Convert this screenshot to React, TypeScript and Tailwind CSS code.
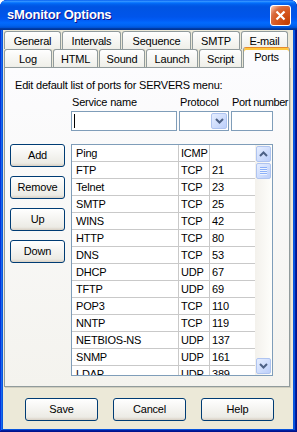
import React from 'react'

const topTabs = [
  { label: 'General', w: 'w-[57px]' },
  { label: 'Intervals', w: 'w-[59px]' },
  { label: 'Sequence', w: 'w-[69px]' },
  { label: 'SMTP', w: 'w-[48px]' },
  { label: 'E-mail', w: 'w-[47px]' },
]

const bottomTabs = [
  { label: 'Log', w: 'w-[48px]' },
  { label: 'HTML', w: 'w-[45px]' },
  { label: 'Sound', w: 'w-[46px]' },
  { label: 'Launch', w: 'w-[52px]' },
  { label: 'Script', w: 'w-[43px]' },
]

const ports = [
  ['Ping', 'ICMP', ''],
  ['FTP', 'TCP', '21'],
  ['Telnet', 'TCP', '23'],
  ['SMTP', 'TCP', '25'],
  ['WINS', 'TCP', '42'],
  ['HTTP', 'TCP', '80'],
  ['DNS', 'TCP', '53'],
  ['DHCP', 'UDP', '67'],
  ['TFTP', 'UDP', '69'],
  ['POP3', 'TCP', '110'],
  ['NNTP', 'TCP', '119'],
  ['NETBIOS-NS', 'UDP', '137'],
  ['SNMP', 'UDP', '161'],
  ['LDAP', 'UDP', '389'],
]

const tabCls =
  'h-[18px] flex justify-center pt-[2px] leading-[14px] border border-b-0 border-[#919B9C] rounded-t-[3px] bg-[linear-gradient(180deg,#fff,#fafaf9_26%,#f0f0ea_95%,#ecebe6)]'

const btnCls =
  'h-[23px] flex items-center justify-center border border-[#003C74] rounded-[3px] bg-[linear-gradient(180deg,#fff,#ecebe5_86%,#d8d0c4)]'

const scrollBtn =
  'w-[15px] h-[16px] flex items-center justify-center rounded-[2px] border border-[#AFC4F0] bg-[linear-gradient(135deg,#E6EEFF,#BCCFFA)]'

const Chevron = ({ up }: { up?: boolean }) => (
  <svg width="9" height="6" viewBox="0 0 9 6">
    <path
      d={up ? 'M1 5 L4.5 1.5 L8 5' : 'M1 1 L4.5 4.5 L8 1'}
      fill="none"
      stroke="#4D6185"
      strokeWidth="2"
    />
  </svg>
)

export default function App() {
  return (
    <div className="w-[297px] h-[432px] flex flex-col rounded-t-[7px] overflow-hidden bg-[#0855DD] shadow-[inset_-1px_-1px_#00138c,inset_1px_1px_#0831d9,inset_-2px_-2px_#001ea0,inset_2px_2px_#166aee] font-['Liberation_Sans',Arial,sans-serif] text-[11px] tracking-[-0.2px] text-black">
      {/* title bar */}
      <div className="h-[30px] shrink-0 flex items-center pl-[7px] pr-[6px] bg-[linear-gradient(180deg,#0058ee_0%,#3593ff_4%,#288eff_6%,#127dff_8%,#036ffc_10%,#0262ee_14%,#0057e5_20%,#0054e3_24%,#0055eb_56%,#005bf5_66%,#026afe_76%,#0062ef_86%,#0052d6_92%,#0040ab_94%,#003092_100%)]">
        <span className="text-white font-bold text-[13px] leading-[16px] [text-shadow:1px_1px_#0F1089]">sMonitor Options</span>
        <div className="ml-auto w-[21px] h-[21px] rounded-[3px] border border-white flex items-center justify-center bg-[radial-gradient(circle_at_90%_90%,#c43e00_0%,#d85a22_55%,#d86d42_72%,#f7b79a_92%,#fff_100%)]">
          <svg width="11" height="11" viewBox="0 0 11 11">
            <path d="M1.5 1.5 L9.5 9.5 M9.5 1.5 L1.5 9.5" stroke="#fff" strokeWidth="2.2" />
          </svg>
        </div>
      </div>

      {/* client */}
      <div className="flex-1 ml-[3px] mr-[4px] mb-[3px] bg-[#ECE9D8] pt-[1px]">
        <div className="flex gap-[1px] ml-[1px]">
          {topTabs.map((t) => (
            <div key={t.label} className={`${tabCls} ${t.w}`}>{t.label}</div>
          ))}
        </div>
        <div className="flex gap-[1px] ml-[1px] h-[18px]">
          {bottomTabs.map((t) => (
            <div key={t.label} className={`${tabCls} ${t.w}`}>{t.label}</div>
          ))}
          <div className="w-[47px] h-[21px] -mt-[2px] relative z-10 flex justify-center pt-[2px] leading-[14px] border border-b-0 border-[#919B9C] border-t-[#E68B2C] rounded-t-[3px] bg-[#FCFCFE] shadow-[inset_0_2px_#FFC73C]">
            Ports
          </div>
        </div>

        {/* panel */}
        <div className="ml-[1px] w-[286px] h-[320px] border border-[#919B9C] bg-[linear-gradient(180deg,#fcfcfe,#f4f3ee)] shadow-[1px_1px_#D0CEBF]">
          <div className="pt-[10px] pl-[10px] leading-[14px]">Edit default list of ports for SERVERS menu:</div>
          <div className="flex mt-[3px] pl-[67px] leading-[14px]">
            <span className="w-[108px]">Service name</span>
            <span className="w-[52px]">Protocol</span>
            <span className="whitespace-nowrap tracking-[-0.4px]">Port number</span>
          </div>
          <div className="flex gap-[2px] mt-[2px] pl-[66px]">
            <div className="w-[106px] h-[20px] border border-[#7F9DB9] bg-white pl-[2px] pt-[2px]">
              <div className="w-[1px] h-[14px] bg-black" />
            </div>
            <div className="w-[50px] h-[20px] border border-[#7F9DB9] bg-white flex justify-end p-[1px]">
              <div className="w-[16px] h-[16px] flex items-center justify-center rounded-[2px] border border-[#AFC4F0] bg-[linear-gradient(135deg,#E6EEFF,#BCCFFA)]">
                <Chevron />
              </div>
            </div>
            <div className="w-[42px] h-[20px] border border-[#7F9DB9] bg-white" />
          </div>

          <div className="flex mt-[13px]">
            <div className="flex flex-col gap-[9px] pl-[5px] w-[60px]">
              {['Add', 'Remove', 'Up', 'Down'].map((b) => (
                <div key={b} className={`${btnCls} w-[55px]`}>{b}</div>
              ))}
            </div>
            <div className="ml-[6px] w-[202px] h-[232px] border border-[#7F9DB9] bg-white flex overflow-hidden">
              <div className="flex-1">
                {ports.map(([name, proto, port]) => (
                  <div key={name} className="flex h-[17px] border-b border-[#C9C9C9] leading-[16px]">
                    <div className="w-[107px] border-r border-[#C9C9C9] pl-[4px]">{name}</div>
                    <div className="w-[31px] border-r border-[#C9C9C9] pl-[2px]">{proto}</div>
                    <div className="flex-1 pl-[2px]">{port}</div>
                  </div>
                ))}
              </div>
              <div className="w-[17px] flex flex-col p-[1px] bg-[linear-gradient(90deg,#F3F1EC,#FEFEFB)]">
                <div className={scrollBtn}>
                  <Chevron up />
                </div>
                <div className={`${scrollBtn} mt-[1px]`}>
                  <svg width="7" height="8" viewBox="0 0 7 8">
                    <path d="M0 1.5 H7 M0 3.5 H7 M0 5.5 H7 M0 7.5 H7" stroke="#EEF4FE" strokeWidth="1" />
                    <path d="M0 0.5 H7 M0 2.5 H7 M0 4.5 H7 M0 6.5 H7" stroke="#8CB0F8" strokeWidth="1" />
                  </svg>
                </div>
                <div className="flex-1" />
                <div className={scrollBtn}>
                  <Chevron />
                </div>
              </div>
            </div>
          </div>
        </div>

        {/* dialog buttons */}
        <div className="flex gap-[15px] mt-[11px] pl-[22px]">
          {['Save', 'Cancel', 'Help'].map((b) => (
            <div key={b} className={`${btnCls} w-[73px]`}>{b}</div>
          ))}
        </div>
      </div>
    </div>
  )
}
